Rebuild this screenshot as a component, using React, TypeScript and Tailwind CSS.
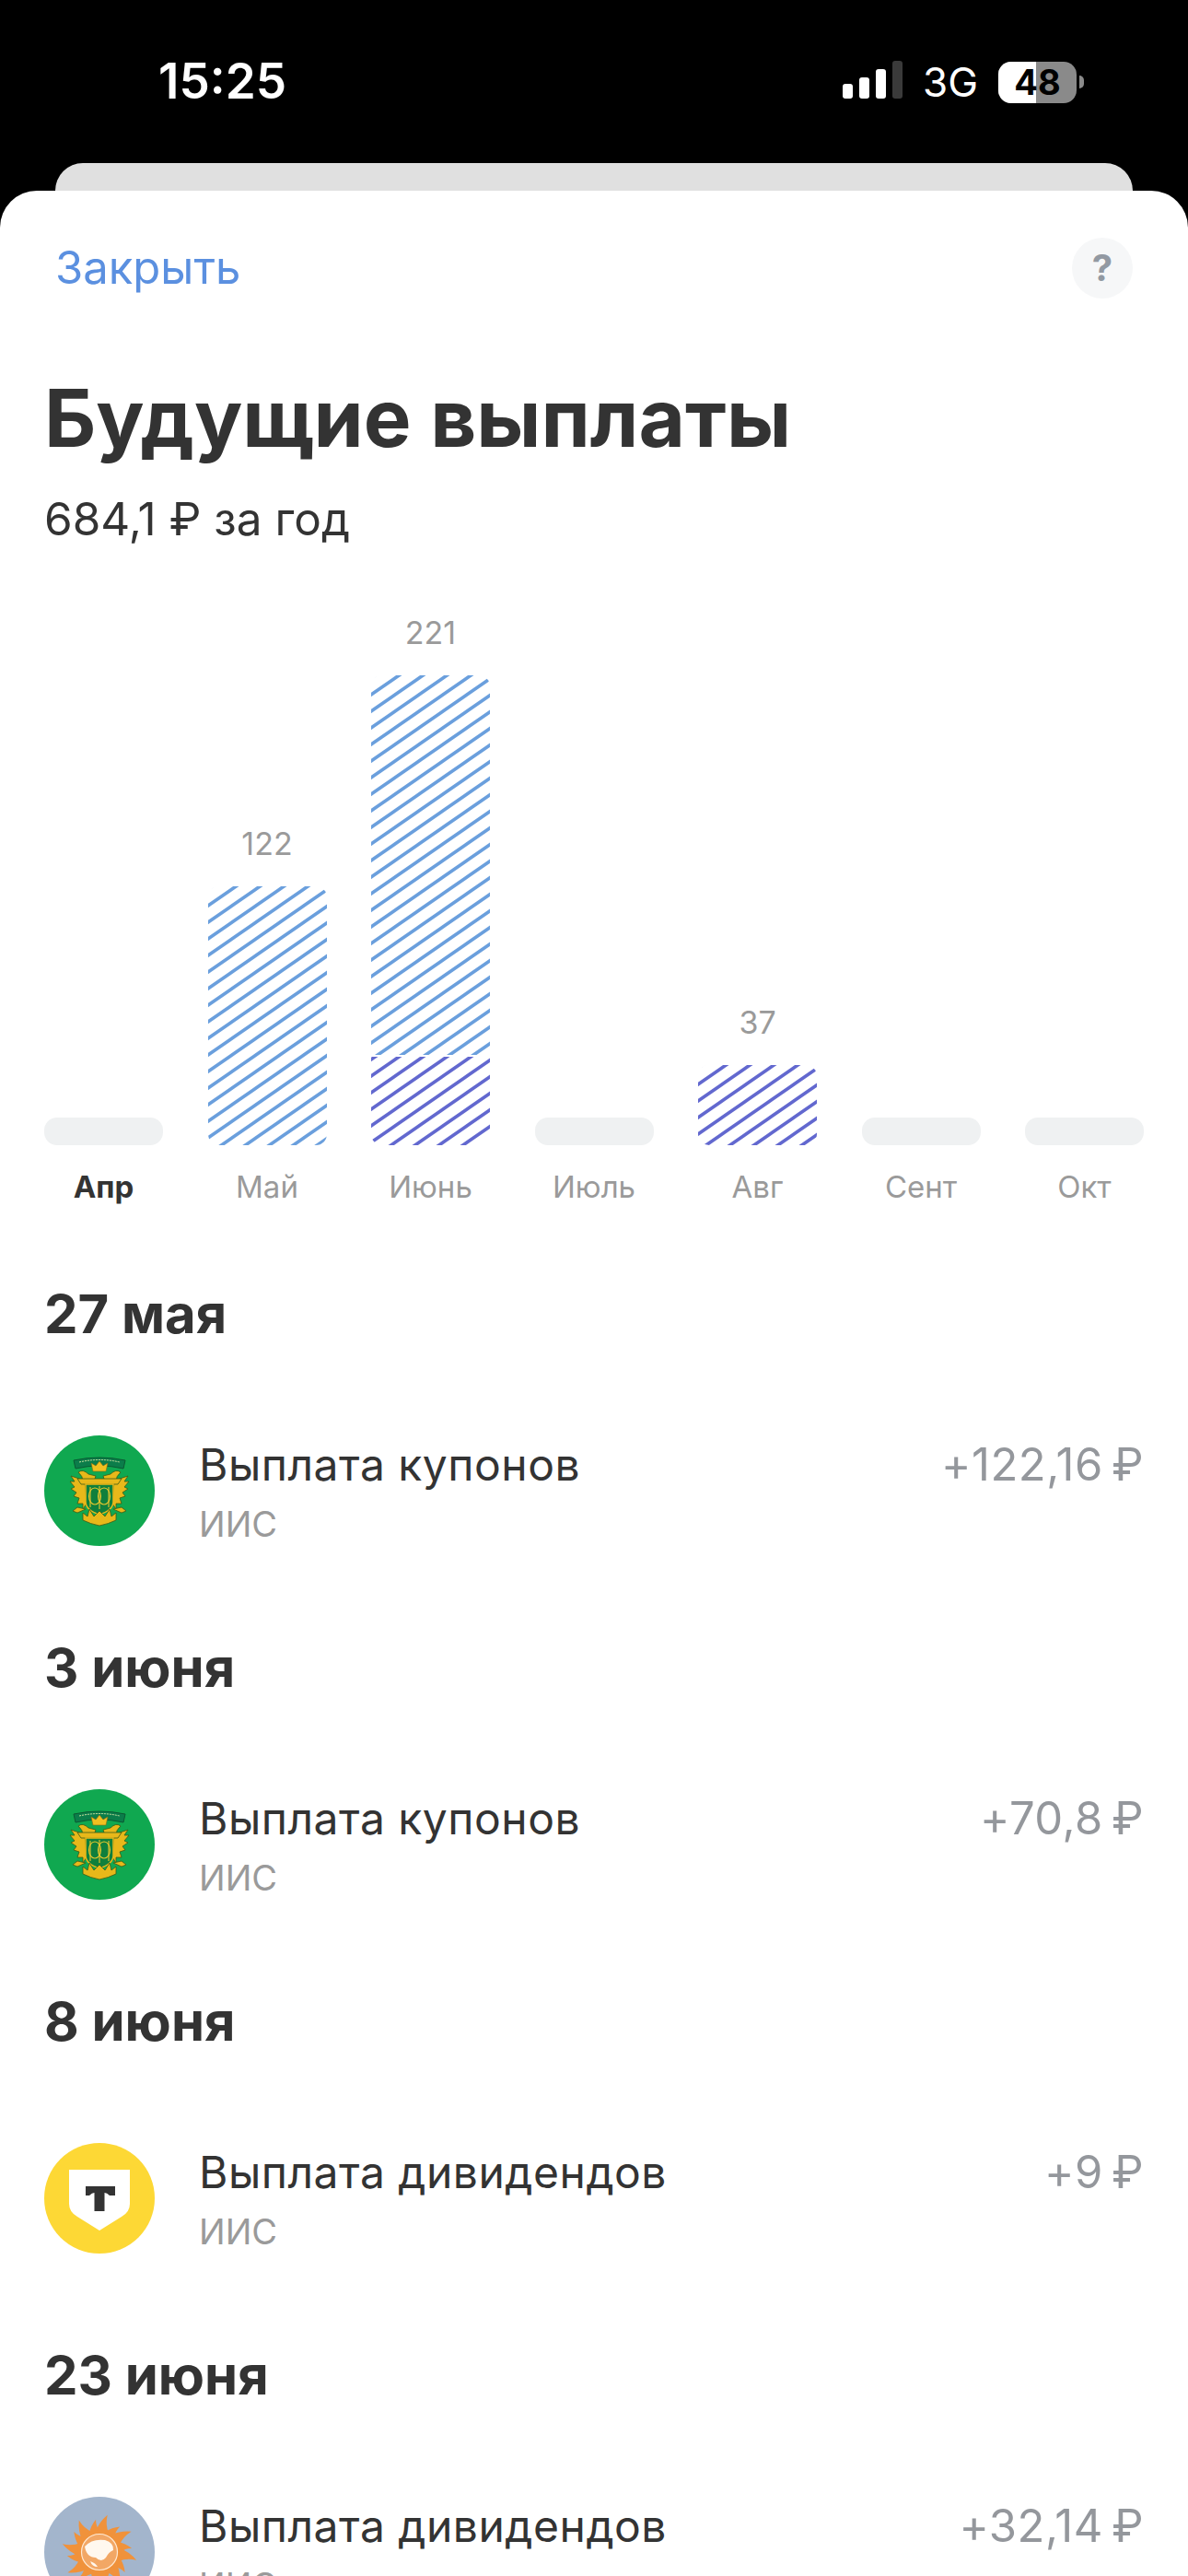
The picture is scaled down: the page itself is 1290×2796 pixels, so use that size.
import React from "react";

const BLUE = "#6a9fdd";
const INDIGO = "#6268cf";

function Hatch({ id, color, height }: { id: string; color: string; height: number }) {
  return (
    <svg width="129" height={height} className="block">
      <defs>
        <pattern id={id} width="26" height="18" patternUnits="userSpaceOnUse" patternTransform="translate(0 3)">
          <path d="M-26 36L52 -18M-26 18L26 -18M0 36L52 0" stroke={color} strokeWidth="3.600" fill="none" />
        </pattern>
      </defs>
      <rect width="129" height={height} fill={`url(#${id})`} />
    </svg>
  );
}

function EmptyBar() {
  return <div className="h-[30px] w-full rounded-[14px] bg-[#eff1f2]" />;
}

function Column({ value, children }: { value?: string; children: React.ReactNode }) {
  return (
    <div className="flex flex-col items-center justify-end">
      {value && <div className="mb-[28px] text-[34px] leading-[36px] text-[#9a9a9a]">{value}</div>}
      <div className="w-full overflow-hidden rounded-[12px]">{children}</div>
    </div>
  );
}

function Chart() {
  const months = ["Апр", "Май", "Июнь", "Июль", "Авг", "Сент", "Окт"];
  return (
    <div className="w-[1194px]">
      <div className="mt-[76px] grid h-[574px] grid-cols-7 items-end gap-x-[48.5px]">
        <EmptyBar />
        <Column value="122">
          <Hatch id="may" color={BLUE} height={281} />
        </Column>
        <Column value="221">
          <div className="flex flex-col gap-[2px]">
            <Hatch id="june-top" color={BLUE} height={412} />
            <Hatch id="june-low" color={INDIGO} height={96} />
          </div>
        </Column>
        <EmptyBar />
        <Column value="37">
          <Hatch id="aug" color={INDIGO} height={87} />
        </Column>
        <EmptyBar />
        <EmptyBar />
      </div>
      <div className="mt-[23px] grid grid-cols-7 gap-x-[48.5px]">
        {months.map((m, i) => (
          <div
            key={m}
            className={
              i === 0
                ? "text-center text-[33px] leading-[44px] font-bold text-[#333333]"
                : "text-center text-[33px] leading-[44px] text-[#9a9a9a]"
            }
          >
            {m}
          </div>
        ))}
      </div>
    </div>
  );
}

function CrestLogo() {
  const gold = "#e8b81a";
  const dark = "#3c5a14";
  return (
    <svg viewBox="0 0 120 120" className="h-[120px] w-[120px] shrink-0">
      <circle cx="60" cy="60" r="60" fill="#10a850" />
      <path d="M32 27Q60 21 88 27L86 36Q60 30 34 36Z" fill="#0b7d4a" stroke="#0a5a33" strokeWidth="1" />
      <path d="M38 29Q60 24 82 29" stroke="#cfe3a0" strokeWidth="1" strokeDasharray="2 1" fill="none" />
      <path d="M53 39L51 30L56 33L60 28L64 33L69 30L67 39Z" fill="#f0c020" stroke="#8a6a10" strokeWidth="0.6" />
      <path d="M48 42Q42 36 37 40Q42 44 42 50L54 50L56 44Z" fill={gold} stroke={dark} strokeWidth="0.8" />
      <path d="M72 42Q78 36 83 40Q78 44 78 50L66 50L64 44Z" fill={gold} stroke={dark} strokeWidth="0.8" />
      <path d="M44 49L29 44L33 50L28 50L33 56L29 58L35 62L32 66L38 68L36 74L42 74L42 80L46 74Z" fill={gold} stroke={dark} strokeWidth="0.8" />
      <path d="M76 49L91 44L87 50L92 50L87 56L91 58L85 62L88 66L82 68L84 74L78 74L78 80L74 74Z" fill={gold} stroke={dark} strokeWidth="0.8" />
      <path d="M36 47H84L80 53H40Z" fill={gold} stroke={dark} strokeWidth="0.8" />
      <path d="M45 53H75V72Q75 81 60 86Q45 81 45 72Z" fill="#0f7f3c" stroke={gold} strokeWidth="1.500" />
      <ellipse cx="55" cy="66" rx="6.500" ry="9" stroke="#e9c72d" strokeWidth="1.100" fill="none" />
      <ellipse cx="65" cy="66" rx="6.500" ry="9" stroke="#e9c72d" strokeWidth="1.100" fill="none" />
      <path d="M60 55V80M50 56V78M70 56V78" stroke="#e9c72d" strokeWidth="1.100" fill="none" />
      <path d="M36 78L31 82L36 84L45 80ZM84 78L89 82L84 84L75 80Z" fill={gold} stroke={dark} strokeWidth="0.8" />
      <path d="M60 98Q50 96 42 92L42 84L47 88L49 80L54 88L60 82L66 88L71 80L73 88L78 84L78 92Q70 96 60 98Z" fill={gold} stroke={dark} strokeWidth="0.8" />
    </svg>
  );
}

function ShieldLogo() {
  return (
    <svg viewBox="0 0 120 120" className="h-[120px] w-[120px] shrink-0">
      <circle cx="60" cy="60" r="60" fill="#fdd835" />
      <path d="M27 29H93V66Q93 75 84 80L60 95L36 80Q27 75 27 66Z" fill="#ffffff" />
      <path d="M45 47H77V57H71Q68 54 65.500 54V74H54.500V54Q52 54 49 57H45Z" fill="#333333" />
    </svg>
  );
}

function SunLogo() {
  const spikes = Array.from({ length: 16 }, (_, i) => i * 22.5);
  return (
    <svg viewBox="0 0 120 120" className="h-[120px] w-[120px] shrink-0">
      <circle cx="60" cy="60" r="60" fill="#a3b5cc" />
      {spikes.map((a, i) => (
        <path
          key={a}
          d={i % 2 ? "M54 38Q58 30 65 25Q63 32 66 38Z" : "M53 38Q55 28 63 19Q62 30 67 38Z"}
          fill="#f0923b"
          transform={`rotate(${a + 8} 60 60)`}
        />
      ))}
      <circle cx="60" cy="60" r="24" fill="#f0923b" />
      <circle cx="60" cy="60" r="19.500" fill="#f2a765" stroke="#ffe9d2" strokeWidth="1.200" />
      <path d="M44 54Q52 45 66 47Q76 50 75 58Q70 60 67 66Q62 72 56 66Q46 66 44 54Z" fill="#fff8ef" />
      <path d="M50 70Q56 72 58 76Q52 76 50 70Z" fill="#fff8ef" />
    </svg>
  );
}

function Payment({
  date,
  logo,
  title,
  amount,
}: {
  date: string;
  logo: React.ReactNode;
  title: string;
  amount: string;
}) {
  return (
    <section>
      <h2 className="text-[58px] leading-[66px] font-bold text-[#333333]">{date}</h2>
      <div className="mt-[99px] flex items-start">
        {logo}
        <div className="ml-[48px] flex flex-col pt-[4px]">
          <div className="text-[48px] leading-[56px] tracking-[0.5px] text-[#333333]">{title}</div>
          <div className="mt-[15px] text-[38px] leading-[42px] text-[#9a9a9a]">ИИС</div>
        </div>
        <div className="ml-auto pt-[4px] text-[49px] leading-[56px] tracking-[0.5px] text-[#94979c] [word-spacing:-5px]">
          {amount}
        </div>
      </div>
    </section>
  );
}

export default function App() {
  return (
    <div className="flex h-[2796px] w-[1290px] flex-col overflow-hidden bg-black font-['Inter',sans-serif]">
      <div className="flex h-[177px] shrink-0 items-start text-white">
        <div className="ml-[172px] mt-[58px] text-[53px] leading-[60px] font-semibold">15:25</div>
        <div className="ml-auto mr-[113px] mt-[64px] flex items-center">
          <div className="mt-[2px] flex h-[41px] items-end gap-[7px] self-start">
            <div className="h-[16px] w-[11px] rounded-[3px] bg-white" />
            <div className="h-[23px] w-[11px] rounded-[3px] bg-white" />
            <div className="h-[32px] w-[11px] rounded-[3px] bg-white" />
            <div className="h-[41px] w-[11px] rounded-[3px] bg-[#3a3a3a]" />
          </div>
          <div className="ml-[22px] text-[44px] leading-[50px]">3G</div>
          <div className="relative ml-[22px] h-[45px] w-[85px] overflow-hidden rounded-[14px] bg-[#8a8a8a]">
            <div className="h-full w-[41px] bg-white" />
            <div className="absolute inset-0 text-center text-[38px] leading-[45px] font-bold text-black">48</div>
          </div>
          <div className="ml-[3px] h-[14px] w-[5px] rounded-r-full bg-[#8a8a8a]" />
        </div>
      </div>

      <div className="mx-[60px] h-[30px] shrink-0 rounded-t-[30px] bg-[#e0e0e0]" />

      <div className="flex-1 rounded-t-[40px] bg-white px-[48px]">
        <div className="mt-[51px] flex h-[66px] items-center justify-between pl-[12px] pr-[12px]">
          <span className="text-[49px] leading-[56px] text-[#5b90e0]">Закрыть</span>
          <div className="flex h-[66px] w-[66px] items-center justify-center rounded-full bg-[#f6f7f8] text-[40px] font-bold text-[#9299a2]">
            ?
          </div>
        </div>

        <h1 className="mt-[81px] text-[87px] leading-[98px] font-bold text-[#333333]">Будущие выплаты</h1>
        <div className="mt-[30px] text-[49.5px] leading-[60px] text-[#333333]">684,1 ₽ за год</div>

        <Chart />

        <div className="mt-[83px] flex flex-col gap-[99px]">
          <Payment date="27 мая" logo={<CrestLogo />} title="Выплата купонов" amount="+122,16 ₽" />
          <Payment date="3 июня" logo={<CrestLogo />} title="Выплата купонов" amount="+70,8 ₽" />
          <Payment date="8 июня" logo={<ShieldLogo />} title="Выплата дивидендов" amount="+9 ₽" />
          <Payment date="23 июня" logo={<SunLogo />} title="Выплата дивидендов" amount="+32,14 ₽" />
        </div>
      </div>
    </div>
  );
}
